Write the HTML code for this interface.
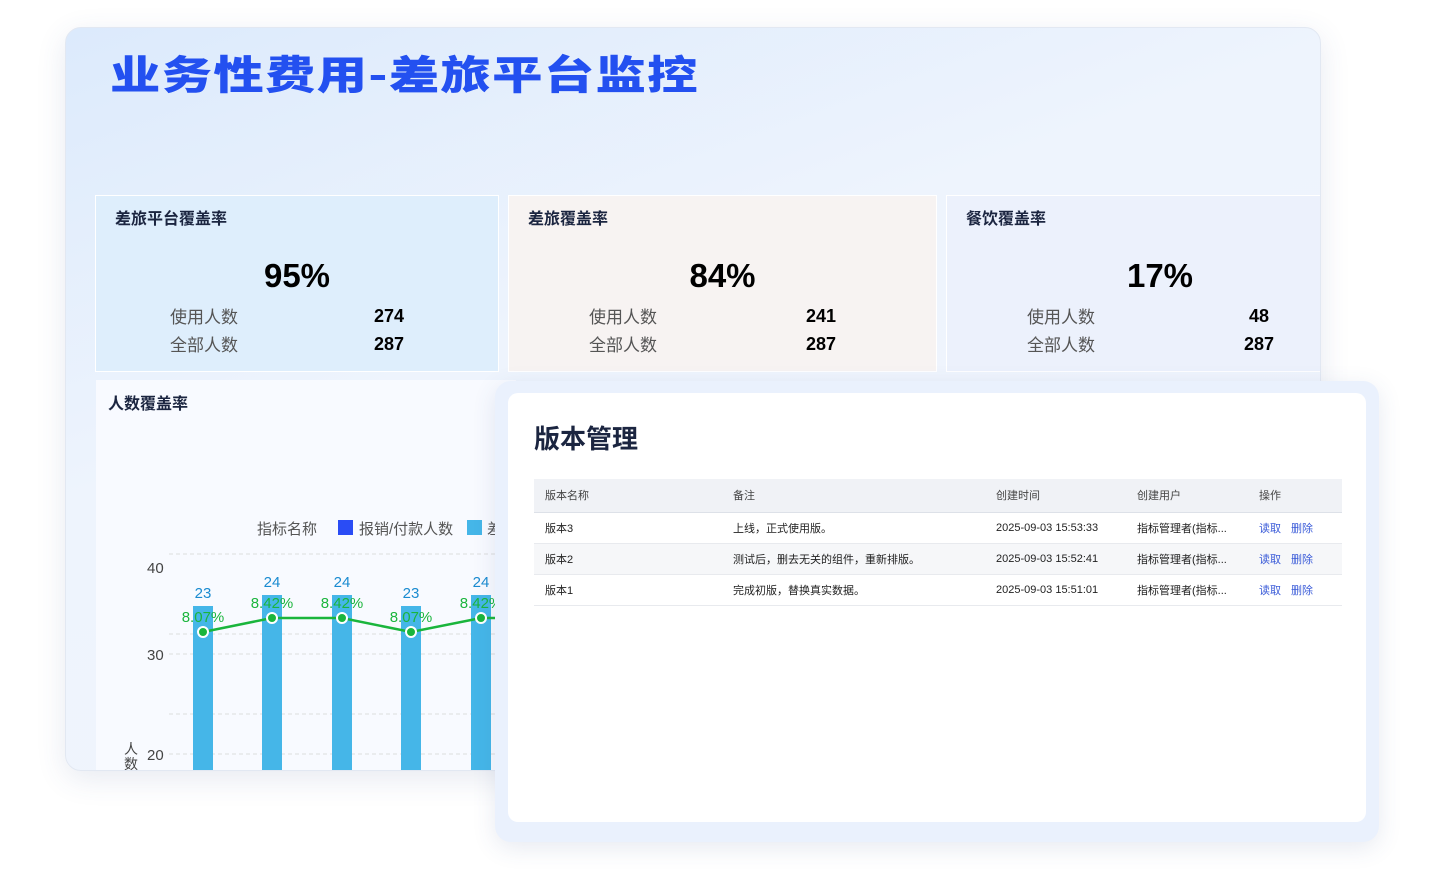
<!DOCTYPE html>
<html><head><meta charset="utf-8"><style>
*{margin:0;padding:0;box-sizing:border-box}
body{width:1444px;height:872px;background:#fff;position:relative;overflow:hidden;font-family:"Liberation Sans","Noto Sans CJK SC",sans-serif}
.main{position:absolute;left:65px;top:27px;width:1256px;height:744px;border-radius:16px;overflow:hidden;background:linear-gradient(160deg,#dceafc 0%,#eef4fd 40%,#f1f4fc 100%);box-shadow:0 8px 30px rgba(60,80,140,.12);border:1px solid #e2e8f2}
.title{position:absolute;left:44px;top:15px;font-size:40px;font-weight:900;color:#2350f0;letter-spacing:1px;font-family:"Noto Sans CJK SC",sans-serif;transform:scaleX(1.26);transform-origin:left top;white-space:nowrap}
.card{position:absolute;top:167px;height:177px;border:1px solid #fff}
.card h3{position:absolute;left:19px;top:9px;font-size:16px;font-weight:700;color:#1b2540}
.big{position:absolute;top:61px;font-size:33px;font-weight:700;color:#000;width:100%;text-align:center}
.lab{position:absolute;font-size:17px;color:#555}
.num{position:absolute;font-size:18px;font-weight:700;color:#000}
.chart{position:absolute;left:30px;top:352px;width:420px;height:400px;background:#f8faff}
.modal{position:absolute;left:495px;top:381px;width:884px;height:461px;border-radius:16px;background:#eaf1fd;box-shadow:0 6px 24px rgba(60,80,140,.12)}
.inner{position:absolute;left:13px;top:12px;width:858px;height:429px;background:#fff;border-radius:10px}
table{position:absolute;left:26px;top:86px;width:808px;border-collapse:collapse;font-size:11px;color:#222}
th{background:#f0f2f6;height:33px;text-align:left;font-weight:400;color:#444;border-bottom:1px solid #dde1e8}
td{height:31px;border-bottom:1px solid #e8eaee}
th:first-child,td:first-child{padding-left:11px}
.a{color:#3a5bd8}
</style></head><body>
<div class="main">
<div class="title">业务性费用-差旅平台监控</div>
<div class="card" style="left:29px;width:404px;background:#deeefc">
<h3>差旅平台覆盖率</h3><div class="big">95%</div>
<div class="lab" style="left:74px;top:107px">使用人数</div><div class="num" style="left:278px;top:110px">274</div>
<div class="lab" style="left:74px;top:135px">全部人数</div><div class="num" style="left:278px;top:138px">287</div></div>
<div class="card" style="left:442px;width:429px;background:#f7f3f2">
<h3>差旅覆盖率</h3><div class="big">84%</div>
<div class="lab" style="left:80px;top:107px">使用人数</div><div class="num" style="left:297px;top:110px">241</div>
<div class="lab" style="left:80px;top:135px">全部人数</div><div class="num" style="left:297px;top:138px">287</div></div>
<div class="card" style="left:880px;width:380px;background:#ecf1fc">
<h3>餐饮覆盖率</h3><div class="big" style="left:24px">17%</div>
<div class="lab" style="left:80px;top:107px">使用人数</div><div class="num" style="left:302px;top:110px">48</div>
<div class="lab" style="left:80px;top:135px">全部人数</div><div class="num" style="left:297px;top:138px">287</div></div>
<div class="chart">
<div style="position:absolute;left:12px;top:10px;font-size:16px;font-weight:700;color:#1b2540">人数覆盖率</div>
<svg width="420" height="400" style="position:absolute;left:0;top:0;font-family:'Liberation Sans','Noto Sans CJK SC',sans-serif">
<text x="161" y="154" font-size="15" fill="#555">指标名称</text>
<rect x="242" y="140" width="15" height="15" fill="#2a4cf5"/><text x="263" y="154" font-size="15" fill="#555">报销/付款人数</text>
<rect x="371" y="140" width="15" height="15" fill="#45b6e8"/><text x="391" y="154" font-size="15" fill="#555">差旅</text>
<g stroke="#ddd" stroke-dasharray="4,3"><line x1="73" y1="174" x2="420" y2="174"/><line x1="73" y1="254" x2="420" y2="254"/><line x1="73" y1="274" x2="420" y2="274"/><line x1="73" y1="334" x2="420" y2="334"/><line x1="73" y1="374" x2="420" y2="374"/></g>
<g font-size="15" fill="#444"><text x="51" y="193">40</text><text x="51" y="280">30</text><text x="51" y="380">20</text></g>
<text x="28" y="374" font-size="14" fill="#444">人</text><text x="28" y="389" font-size="14" fill="#444">数</text>
<g fill="#45b6e8"><rect x="97" y="226" width="20" height="180"/><rect x="166" y="215" width="20" height="190"/><rect x="236" y="215" width="20" height="190"/><rect x="305" y="226" width="20" height="180"/><rect x="375" y="215" width="20" height="190"/></g>
<g font-size="15" fill="#1a8bd0" text-anchor="middle"><text x="107" y="218">23</text><text x="176" y="207">24</text><text x="246" y="207">24</text><text x="315" y="218">23</text><text x="385" y="207">24</text></g>
<polyline points="107,252 176,238 246,238 315,252 385,238 420,238" fill="none" stroke="#1ab53c" stroke-width="2.5"/>
<g fill="#1ab53c" stroke="#fff" stroke-width="2"><circle cx="107" cy="252" r="5"/><circle cx="176" cy="238" r="5"/><circle cx="246" cy="238" r="5"/><circle cx="315" cy="252" r="5"/><circle cx="385" cy="238" r="5"/></g>
<g font-size="15" fill="#1ab53c" text-anchor="middle"><text x="107" y="242">8.07%</text><text x="176" y="228">8.42%</text><text x="246" y="228">8.42%</text><text x="315" y="242">8.07%</text><text x="385" y="228">8.42%</text></g>
</svg></div>
</div>
<div class="modal"><div class="inner">
<div style="position:absolute;left:26px;top:26px;font-size:26px;font-weight:700;color:#1b2540">版本管理</div>
<table>
<tr><th style="width:199px">版本名称</th><th style="width:263px">备注</th><th style="width:141px">创建时间</th><th style="width:122px">创建用户</th><th>操作</th></tr>
<tr><td>版本3</td><td>上线，正式使用版。</td><td>2025-09-03 15:53:33</td><td>指标管理者(指标...</td><td><span class="a">读取</span><span class="a" style="margin-left:10px">删除</span></td></tr>
<tr style="background:#f6f7f9"><td>版本2</td><td>测试后，删去无关的组件，重新排版。</td><td>2025-09-03 15:52:41</td><td>指标管理者(指标...</td><td><span class="a">读取</span><span class="a" style="margin-left:10px">删除</span></td></tr>
<tr><td>版本1</td><td>完成初版，替换真实数据。</td><td>2025-09-03 15:51:01</td><td>指标管理者(指标...</td><td><span class="a">读取</span><span class="a" style="margin-left:10px">删除</span></td></tr>
</table></div></div>
</body></html>
